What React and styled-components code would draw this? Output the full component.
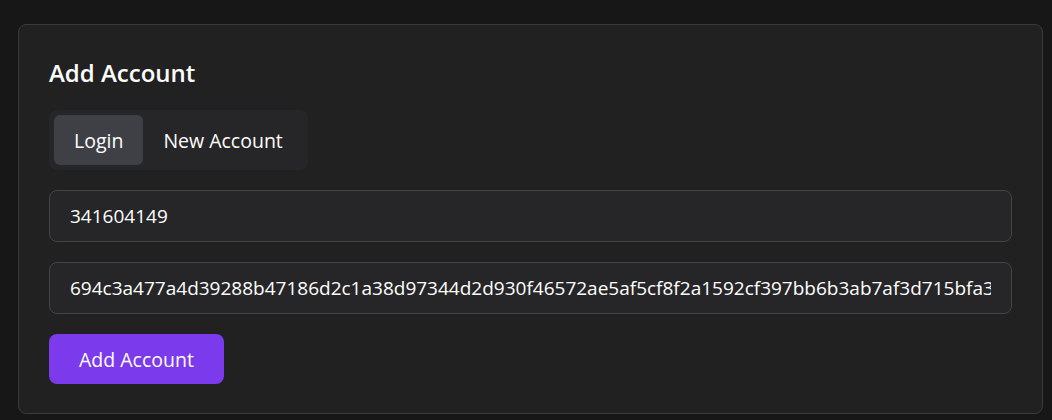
import React, { useState } from 'react';
import styled, { createGlobalStyle } from 'styled-components';

const GlobalStyle = createGlobalStyle`
  html, body {
    margin: 0;
    padding: 0;
    background: #171717;
  }
  body {
    padding: 24px 9px 0 18px;
    font-family: "Open Sans", "Noto Sans", sans-serif;
    color: #fff;
  }
`;

const Card = styled.div`
  background: #212121;
  border: 1px solid #3a3a3a;
  border-radius: 8px;
  padding: 30px 30px 29px;
  display: flex;
  flex-direction: column;
  align-items: flex-start;
`;

const Title = styled.h2`
  margin: 0 0 19px;
  font-size: 24px;
  font-weight: 600;
  line-height: 36px;
  color: #fff;
`;

const Tabs = styled.div`
  display: flex;
  padding: 5px;
  background: #262628;
  border-radius: 8px;
  margin-bottom: 20px;
`;

const Tab = styled.button`
  height: 50px;
  padding: 0 20px;
  border: none;
  border-radius: 6px;
  background: ${(p) => (p.$active ? '#3f3f46' : 'transparent')};
  color: #fff;
  font-family: inherit;
  font-size: 19.5px;
  cursor: pointer;
`;

const Input = styled.input`
  box-sizing: border-box;
  width: 100%;
  height: 52px;
  padding: 0 20px;
  margin-bottom: 20px;
  background: #262628;
  border: 1px solid #444;
  border-radius: 8px;
  color: #fff;
  font-family: inherit;
  font-size: 19px;
  outline: none;
`;

const Submit = styled.button`
  height: 50px;
  padding: 0 30px;
  border: none;
  border-radius: 8px;
  background: #7c3aed;
  color: #fff;
  font-family: inherit;
  font-size: 19.5px;
  cursor: pointer;
`;

export default function App() {
  const [tab, setTab] = useState('login');
  const [id, setId] = useState('341604149');
  const [token, setToken] = useState(
    '694c3a477a4d39288b47186d2c1a38d97344d2d930f46572ae5af5cf8f2a1592cf397bb6b3ab7af3d715bfa35e9c41'
  );

  return (
    <>
      <GlobalStyle />
      <Card>
        <Title>Add Account</Title>
        <Tabs>
          <Tab $active={tab === 'login'} onClick={() => setTab('login')}>Login</Tab>
          <Tab $active={tab === 'new'} onClick={() => setTab('new')}>New Account</Tab>
        </Tabs>
        <Input value={id} onChange={(e) => setId(e.target.value)} />
        <Input value={token} onChange={(e) => setToken(e.target.value)} />
        <Submit>Add Account</Submit>
      </Card>
    </>
  );
}
